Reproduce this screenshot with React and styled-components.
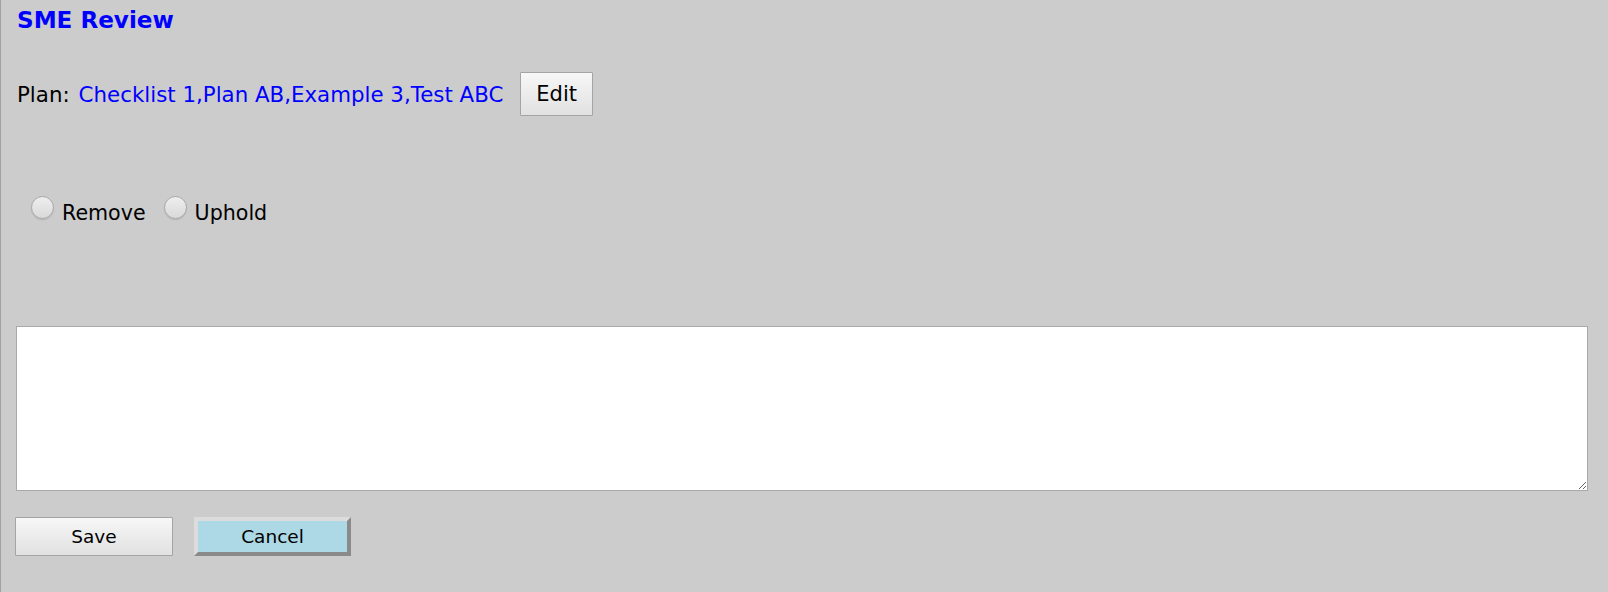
import React from 'react';
import styled, { createGlobalStyle } from 'styled-components';

const GlobalStyle = createGlobalStyle`
  html, body {
    margin: 0;
    padding: 0;
    background: #cccccc;
  }
  body {
    font-family: "DejaVu Sans", Verdana, sans-serif;
  }
`;

const Page = styled.div`
  min-height: 100vh;
  box-sizing: border-box;
  border-left: 1px solid #a2a2a2;
  padding: 7px 21px 0 14px;
`;

const Title = styled.h2`
  margin: 0 0 39px 2px;
  font-size: 23.1px;
  line-height: 26px;
  font-weight: bold;
  color: #0000ff;
`;

const PlanRow = styled.div`
  display: flex;
  align-items: center;
  font-size: 21.35px;
  color: #000;
`;

const Label = styled.span`
  margin-left: 2px;
  margin-right: 9px;
`;

const PlanLinks = styled.span`
  color: #0000ff;
`;

const GreyButton = styled.button`
  font-family: "DejaVu Sans", Verdana, sans-serif;
  font-size: ${p => p.$size || '21px'};
  color: #000;
  height: ${p => p.$height || '44px'};
  width: ${p => p.$width || 'auto'};
  padding: 0 15px;
  margin-left: ${p => p.$gap || '0'};
  border: 1px solid #a4a4a4;
  border-radius: 1px;
  background: linear-gradient(#f7f7f7, #e1e1e1);
  cursor: pointer;
`;

const CancelButton = styled.button`
  font-family: "DejaVu Sans", Verdana, sans-serif;
  font-size: 18.5px;
  color: #000;
  height: 39px;
  width: 157px;
  margin-left: 21px;
  border: 4px solid;
  border-color: #dcdcdc #8a8a8a #8a8a8a #dcdcdc;
  background: #add8e6;
  cursor: pointer;
`;

const Choices = styled.div`
  display: flex;
  align-items: center;
  height: 28px;
  margin: 83px 0 0 16px;
  font-size: 20.6px;
`;

const Choice = styled.label`
  display: flex;
  align-items: center;
  gap: 8px;
  margin-right: 18px;
  cursor: pointer;
`;

const Radio = styled.input.attrs({ type: 'radio' })`
  appearance: none;
  margin: 0;
  width: 23px;
  height: 23px;
  border-radius: 50%;
  border: 1px solid #a9a9a9;
  background: linear-gradient(#eeeeee, #d9d9d9);
  box-shadow: 0 1px 1px rgba(0, 0, 0, 0.12);
  position: relative;
  top: -6px;
`;

const Notes = styled.textarea`
  display: block;
  box-sizing: border-box;
  width: 100%;
  height: 165px;
  margin: 99px 0 0 1px;
  border: 1px solid #a9a9a9;
  background: #fff;
  font-family: "DejaVu Sans", Verdana, sans-serif;
  font-size: 16px;
  outline: none;
`;

const Actions = styled.div`
  display: flex;
  align-items: center;
  margin: 26px 0 0 0;
`;

export default function App() {
  return (
    <>
      <GlobalStyle />
      <Page>
        <Title>SME Review</Title>
        <PlanRow>
          <Label>Plan:</Label>
          <PlanLinks>Checklist 1,Plan AB,Example 3,Test ABC</PlanLinks>
          <GreyButton $gap="17px">Edit</GreyButton>
        </PlanRow>
        <Choices>
          <Choice>
            <Radio name="decision" />
            Remove
          </Choice>
          <Choice>
            <Radio name="decision" />
            Uphold
          </Choice>
        </Choices>
        <Notes />
        <Actions>
          <GreyButton $size="18.5px" $height="39px" $width="158px">
            Save
          </GreyButton>
          <CancelButton>Cancel</CancelButton>
        </Actions>
      </Page>
    </>
  );
}
